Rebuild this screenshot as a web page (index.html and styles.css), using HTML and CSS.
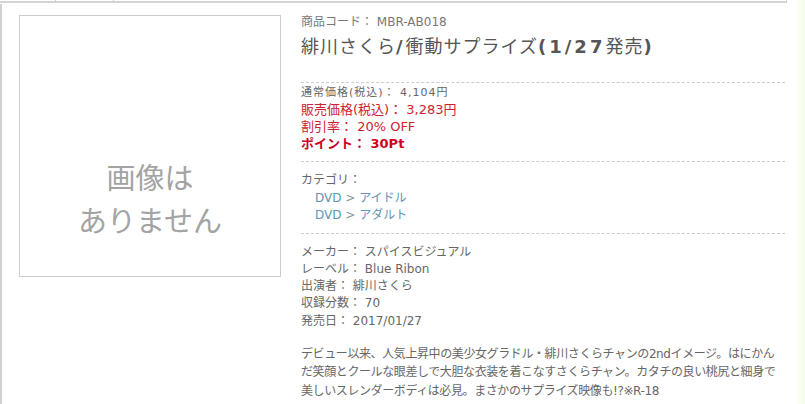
FILE: index.html
```html
<!DOCTYPE html>
<html lang="ja">
<head>
    <meta charset="UTF-8">
    <title>緋川さくら/衝動サプライズ(1/27発売)</title>
    <meta name="viewport" content="width=device-width, initial-scale=1.0">
    <link rel="stylesheet" href="styles.css">
</head>
<body>
<div class="page">
    <div class="main">
        <div class="tabs">
            <span class="tab t1"></span>
            <span class="tab t2"></span>
            <span class="tab t3"></span>
        </div>
        <div class="content">
            <div class="photo">画像は<br>ありません</div>
            <div class="info">
                <div class="sec head">
                    <div class="code">商品コード： MBR-AB018</div>
                    <h1 class="title">緋川さくら<b>/</b>衝動サプライズ<b>(1/27</b>発売<b>)</b></h1>
                </div>
                <div class="sec price">
                    <div class="list-price">通常価格(税込)： 4,104円</div>
                    <div class="sale">販売価格(税込)： 3,283円</div>
                    <div class="sale">割引率： 20% OFF</div>
                    <div class="point">ポイント： 30Pt</div>
                </div>
                <div class="sec cat">
                    <div>カテゴリ：</div>
                    <div class="crumb"><a href="#">DVD</a> &gt; <a href="#">アイドル</a></div>
                    <div class="crumb"><a href="#">DVD</a> &gt; <a href="#">アダルト</a></div>
                </div>
                <div class="sec spec">
                    <div>メーカー： スパイスビジュアル</div>
                    <div>レーベル： Blue Ribon</div>
                    <div>出演者： 緋川さくら</div>
                    <div>収録分数： 70</div>
                    <div>発売日： 2017/01/27</div>
                </div>
                <p class="desc">デビュー以来、人気上昇中の美少女グラドル・緋川さくらチャンの2ndイメージ。はにかん<br>だ笑顔とクールな眼差しで大胆な衣装を着こなすさくらチャン。カタチの良い桃尻と細身で<br>美しいスレンダーボディは必見。まさかのサプライズ映像も!?※R-18</p>
            </div>
        </div>
    </div>
    <div class="side"></div>
</div>
</body>
</html>
```

FILE: styles.css
```css
body {
    margin: 0;
    background: #fff;
    font-family: "DejaVu Sans", "Noto Sans CJK JP", sans-serif;
    font-size: 12px;
    color: #666;
}

.page {
    display: flex;
    height: 404px;
    overflow: hidden;
}

.main {
    width: 797px;
}

.tabs {
    display: flex;
    width: 787px;
    height: 1px;
    border-bottom: 2px solid #d4d4d4;
}

.tab {
    border-right: 1px solid #ccc;
}

.t1 { width: 55px; }
.t2 { width: 57px; }
.t3 { flex: 1; }

.content {
    display: flex;
    gap: 20px;
    margin-top: 1px;
    padding-left: 17px;
    border-left: 2px solid #d0d0d0;
    height: 400px;
}

.photo {
    flex: none;
    width: 260px;
    height: 260px;
    margin-top: 11px;
    padding-top: 142px;
    box-sizing: border-box;
    height: 262px;
    width: 262px;
    border: 1px solid #ccc;
    text-align: center;
    font-size: 29px;
    line-height: 43px;
    color: #a3a3a3;
}

.info {
    width: 484px;
    padding-top: 10px;
}

.sec {
    border-bottom: 1px dashed #ccc;
}

.head {
    padding-bottom: 22px;
}

.code {
    line-height: 17px;
    color: #777;
}

.title {
    margin: 3px 0 0;
    font-size: 18px;
    font-weight: normal;
    line-height: 26px;
    letter-spacing: 1px;
    color: #555;
}

.title b {
    letter-spacing: 3px;
}

.price {
    padding: 2px 0 9px;
}

.list-price {
    font-size: 11px;
    line-height: 16px;
    letter-spacing: 1px;
    color: #666;
}

.sale {
    font-size: 13px;
    line-height: 17px;
    color: #cc2233;
}

.point {
    font-size: 13px;
    line-height: 17px;
    font-weight: bold;
    color: #cc0022;
}

.cat {
    padding: 10px 0 8px;
    line-height: 17.5px;
}

.crumb {
    padding-left: 14px;
    color: #8899a0;
}

.crumb a {
    color: #5f94b4;
    text-decoration: none;
}

.spec {
    border-bottom: none;
    padding-top: 10px;
    line-height: 17.25px;
}

.desc {
    margin: 15px 0 0;
    line-height: 18.5px;
    letter-spacing: -0.4px;
}

.side {
    flex: 1;
    background: linear-gradient(to right, #fbfff6, #f4fce9);
}
```
